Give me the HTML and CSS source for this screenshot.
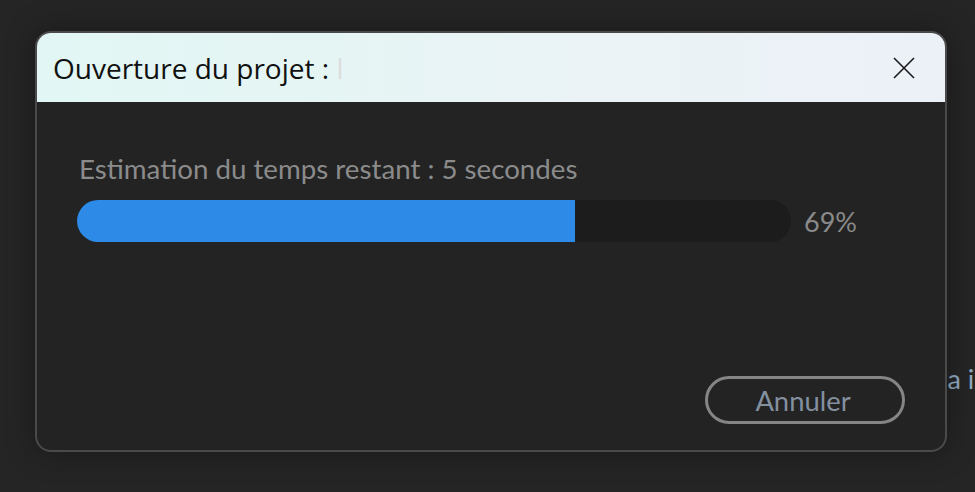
FILE: index.html
```html
<!DOCTYPE html>
<html lang="fr">
<head>
<meta charset="utf-8">
<link rel="stylesheet" href="styles.css">
</head>
<body>
<div class="bg-text">ia i</div>
<div class="dialog">
  <div class="titlebar">
    <div class="title">Ouverture du projet : <span class="hidden-name">l</span></div>
    <button class="close" aria-label="Fermer">
      <svg width="22" height="22" viewBox="0 0 22 22"><path d="M1 1 L21 21 M21 1 L1 21" stroke="#1a1a1a" stroke-width="1.6" fill="none"/></svg>
    </button>
  </div>
  <div class="content">
    <div class="label">Estimation du temps restant : 5 secondes</div>
    <div class="progress-row">
      <div class="track"><div class="fill" style="width:69.7%"></div></div>
      <div class="pct">69%</div>
    </div>
  </div>
  <div class="footer">
    <button class="cancel">Annuler</button>
  </div>
</div>
</body>
</html>
```
FILE: styles.css
```css
* { box-sizing: border-box; }
html, body { margin: 0; height: 100%; }
body {
  background: #252525;
  font-family: Lato, "Noto Sans", sans-serif;
  position: relative;
  overflow: hidden;
  padding: 31px 0 0 35px;
}
.bg-text {
  position: absolute;
  left: 941px;
  top: 362px;
  font-size: 27px;
  color: #8fa8c0;
}
.dialog {
  position: relative;
  width: 912px;
  height: 421px;
  border: 2px solid #4a4a4a;
  border-radius: 16px;
  background: #232323;
  overflow: hidden;
  display: flex;
  flex-direction: column;
  box-shadow: 0 0 30px rgba(0,0,0,0.35);
}
.titlebar {
  height: 69px;
  flex: none;
  display: flex;
  align-items: center;
  justify-content: space-between;
  padding: 0 30px 0 16px;
  background: linear-gradient(90deg, #e2f7f5 0%, #e5f5f4 30%, #ebf3f6 60%, #ecf1f7 100%);
}
.title {
  font-family: "Open Sans", sans-serif;
  font-size: 28px;
  color: #111;
  letter-spacing: 0;
}
.hidden-name { color: #ddd; }
.close {
  border: 0;
  background: none;
  padding: 0;
  width: 22px;
  height: 22px;
  display: flex;
}
.content {
  padding: 50px 0 0 40px;
}
.label {
  font-size: 27.7px;
  color: #8b8b8b;
  line-height: 34px;
  padding-left: 2px;
}
.progress-row {
  margin-top: 14px;
  display: flex;
  align-items: center;
  gap: 13px;
}
.track {
  width: 714px;
  height: 42px;
  border-radius: 21px;
  background: #1c1c1c;
  overflow: hidden;
}
.fill {
  height: 100%;
  background: #2d8ae6;
}
.pct {
  font-size: 27px;
  color: #8a8a8a;
}
.footer {
  margin-top: auto;
  display: flex;
  justify-content: flex-end;
  padding: 0 40px 26px 0;
}
.cancel {
  width: 200px;
  height: 48px;
  border: 3px solid #858585;
  border-radius: 24px;
  background: transparent;
  font-family: Lato, "Noto Sans", sans-serif;
  font-size: 27.4px;
  color: #8390a0;
  padding: 0 4px 0 0;
}
```
